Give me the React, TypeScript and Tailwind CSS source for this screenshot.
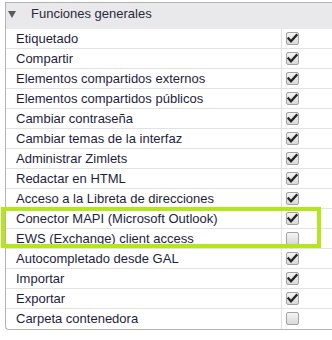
import React from "react";

const rows: [string, boolean][] = [
  ["Etiquetado", true],
  ["Compartir", true],
  ["Elementos compartidos externos", true],
  ["Elementos compartidos públicos", true],
  ["Cambiar contraseña", true],
  ["Cambiar temas de la interfaz", true],
  ["Administrar Zimlets", true],
  ["Redactar en HTML", true],
  ["Acceso a la Libreta de direcciones", true],
  ["Conector MAPI (Microsoft Outlook)", true],
  ["EWS (Exchange) client access", false],
  ["Autocompletado desde GAL", true],
  ["Importar", true],
  ["Exportar", true],
  ["Carpeta contenedora", false],
];

function Box({ checked }: { checked: boolean }) {
  return (
    <div className="w-[13px] h-[13px] rounded-[2px] border border-[#a3a3a3] bg-gradient-to-b from-[#f4f4f4] to-[#d9d9d9] flex items-center justify-center">
      {checked && (
        <svg width="11" height="11" viewBox="0 0 11 11">
          <path d="M1.5 5.5 L4 8.2 L9.5 2.2" fill="none" stroke="#262626" strokeWidth="2.3" strokeLinecap="square" />
        </svg>
      )}
    </div>
  );
}

export default function App() {
  return (
    <div className="relative w-[332px] h-[340px] overflow-hidden bg-white" style={{ fontFamily: '"Liberation Sans", Arial, sans-serif' }}>
      <div className="mt-[2px] ml-[5px] w-[340px] border-l border-t border-b border-[#b3b3b3] rounded-bl-[4px]">
        <div className="h-[26px] bg-[#e9e9eb] flex items-start pt-[3px]">
          <div className="ml-[2px] w-[8px] h-[16px] flex items-center">
            <svg width="8" height="7" viewBox="0 0 8 7">
              <path d="M0 0 H8 L4 7 Z" fill="#5a5a5a" />
            </svg>
          </div>
          <span className="ml-[15px] text-[13px] leading-[16px] text-[#2a2a3a]">Funciones generales</span>
        </div>
        {rows.map(([label, checked], i) => (
          <div key={i} className={`flex h-[20px] ${i < rows.length - 1 ? "border-b border-[#e2e2e2]" : ""}`}>
            <div className="w-[276px] pl-[10px] text-[13px] leading-[20px] text-[#1e1e3c] border-r border-[#e2e2e2] whitespace-nowrap">
              {label}
            </div>
            <div className="pl-[4px] pt-[3px]">
              <Box checked={checked} />
            </div>
          </div>
        ))}
      </div>
      <div className="absolute left-[1px] top-[207px] w-[320px] h-[41px] border-[4px] border-[#b5e61d]" />
    </div>
  );
}
